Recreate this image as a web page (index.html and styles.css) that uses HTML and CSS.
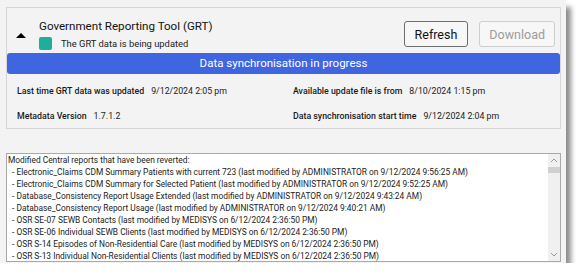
FILE: index.html
```html
<!DOCTYPE html>
<html lang="en">
<head>
<meta charset="utf-8">
<title>GRT</title>
<link rel="stylesheet" href="styles.css">
</head>
<body>
<div class="window">
  <section class="panel">
    <div class="head">
      <span class="caret"></span>
      <div class="head-text">
        <div class="title">Government Reporting Tool (GRT)</div>
        <div class="status"><span class="swatch"></span><span>The GRT data is being updated</span></div>
      </div>
      <div class="buttons">
        <button class="btn">Refresh</button>
        <button class="btn disabled">Download</button>
      </div>
    </div>
    <div class="banner">Data synchronisation in progress</div>
    <div class="info">
      <div class="row"><span class="label">Last time GRT data was updated</span><span class="value">9/12/2024 2:05 pm</span></div>
      <div class="row"><span class="label">Available update file is from</span><span class="value">8/10/2024 1:15 pm</span></div>
      <div class="row"><span class="label">Metadata Version</span><span class="value">1.7.1.2</span></div>
      <div class="row"><span class="label">Data synchronisation start time</span><span class="value">9/12/2024 2:04 pm</span></div>
    </div>
  </section>
  <section class="log">
    <div class="log-text">
      <div>Modified Central reports that have been reverted:</div>
      <div class="item">- Electronic_Claims CDM Summary Patients with current 723 (last modified by ADMINISTRATOR on 9/12/2024 9:56:25 AM)</div>
      <div class="item">- Electronic_Claims CDM Summary for Selected Patient (last modified by ADMINISTRATOR on 9/12/2024 9:52:25 AM)</div>
      <div class="item">- Database_Consistency Report Usage Extended (last modified by ADMINISTRATOR on 9/12/2024 9:43:24 AM)</div>
      <div class="item">- Database_Consistency Report Usage (last modified by ADMINISTRATOR on 9/12/2024 9:40:21 AM)</div>
      <div class="item">- OSR SE-07 SEWB Contacts (last modified by MEDISYS on 6/12/2024 2:36:50 PM)</div>
      <div class="item">- OSR SE-06 Individual SEWB Clients (last modified by MEDISYS on 6/12/2024 2:36:50 PM)</div>
      <div class="item">- OSR S-14 Episodes of Non-Residential Care (last modified by MEDISYS on 6/12/2024 2:36:50 PM)</div>
      <div class="item">- OSR S-13 Individual Non-Residential Clients (last modified by MEDISYS on 6/12/2024 2:36:50 PM)</div>
      <div class="item">- OSR S-12 Episodes of Residential Care (last modified by MEDISYS on 6/12/2024 2:36:50 PM)</div>
    </div>
    <div class="scrollbar">
      <svg class="arrow" viewBox="0 0 8 5" width="8" height="5"><path d="M1 4 L4 1 L7 4" fill="none" stroke="#9a9a9a" stroke-width="1"/></svg>
      <div class="thumb"></div>
      <div class="track"></div>
      <svg class="arrow" viewBox="0 0 8 5" width="8" height="5"><path d="M1 1 L4 4 L7 1" fill="none" stroke="#9a9a9a" stroke-width="1"/></svg>
    </div>
  </section>
</div>
</body>
</html>
```
FILE: styles.css
```css
* { box-sizing: border-box; }
html, body { margin: 0; padding: 0; background: #ffffff; }
body { font-family: Roboto, "Open Sans", sans-serif; color: #1a1a1a; }

.window {
  width: 566px;
  height: 263px;
  background: #f3f3f3;
  box-shadow: 5px 7px 5px rgba(0, 0, 0, 0.45);
  padding: 7px 5px 0 6px;
  display: flex;
  flex-direction: column;
  overflow: hidden;
}

.panel {
  width: 555px;
  height: 122px;
  border: 1px solid #d6d6d6;
  display: flex;
  flex-direction: column;
}

.head {
  display: flex;
  align-items: flex-start;
  height: 50px;
  padding: 0 0 0 9px;
}
.caret {
  width: 0; height: 0;
  border-left: 5px solid transparent;
  border-right: 5px solid transparent;
  border-bottom: 5px solid #000;
  margin-top: 25px;
}
.head-text { margin-left: 13px; padding-top: 10px; }
.title { font-size: 11.6px; line-height: 16px; color: #111; }
.status { display: flex; align-items: center; margin-top: 3px; font-size: 9.4px; color: #222; }
.swatch {
  width: 13px; height: 13px;
  border-radius: 2px;
  background: #1fae9c;
  margin-right: 9px;
}
.buttons { margin-left: auto; display: flex; gap: 11px; padding-top: 13px; padding-right: 5px; }
.btn {
  font-family: inherit;
  font-size: 12.5px;
  height: 26px;
  padding: 0 10px;
  background: #f7f7f7;
  border: 1px solid #6e6e6e;
  border-radius: 3px;
  color: #111;
}
.btn.disabled { border-color: #cfcfcf; color: #9c9c9c; padding: 0 9px; }

.banner {
  height: 21px;
  background: #3f66e0;
  border-radius: 3px;
  color: #fff;
  font-size: 11.5px;
  line-height: 21px;
  text-align: center;
}

.info {
  display: grid;
  grid-template-columns: 276px 1fr;
  padding: 4px 0 0 10px;
}
.row { height: 25px; display: flex; align-items: center; font-size: 8.8px; }
.label { font-weight: 500; margin-right: 7px; }
.value { color: #222; }

.log {
  margin-top: 24px;
  width: 555px;
  height: 109px;
  border: 1px solid #a9a9a9;
  background: #fff;
  display: flex;
  overflow: hidden;
}
.log-text {
  flex: 1;
  padding: 0 0 0 1px;
  font-size: 8.4px;
  line-height: 12px;
  color: #222;
  overflow: hidden;
  white-space: nowrap;
}
.item { padding-left: 4px; }
.scrollbar {
  width: 12px;
  background: #f0f0f0;
  display: flex;
  flex-direction: column;
  align-items: center;
}
.arrow { margin: 4px 0; flex: none; }
.thumb { width: 12px; height: 6px; background: #d0d0d0; flex: none; }
.track { flex: 1; }
```
